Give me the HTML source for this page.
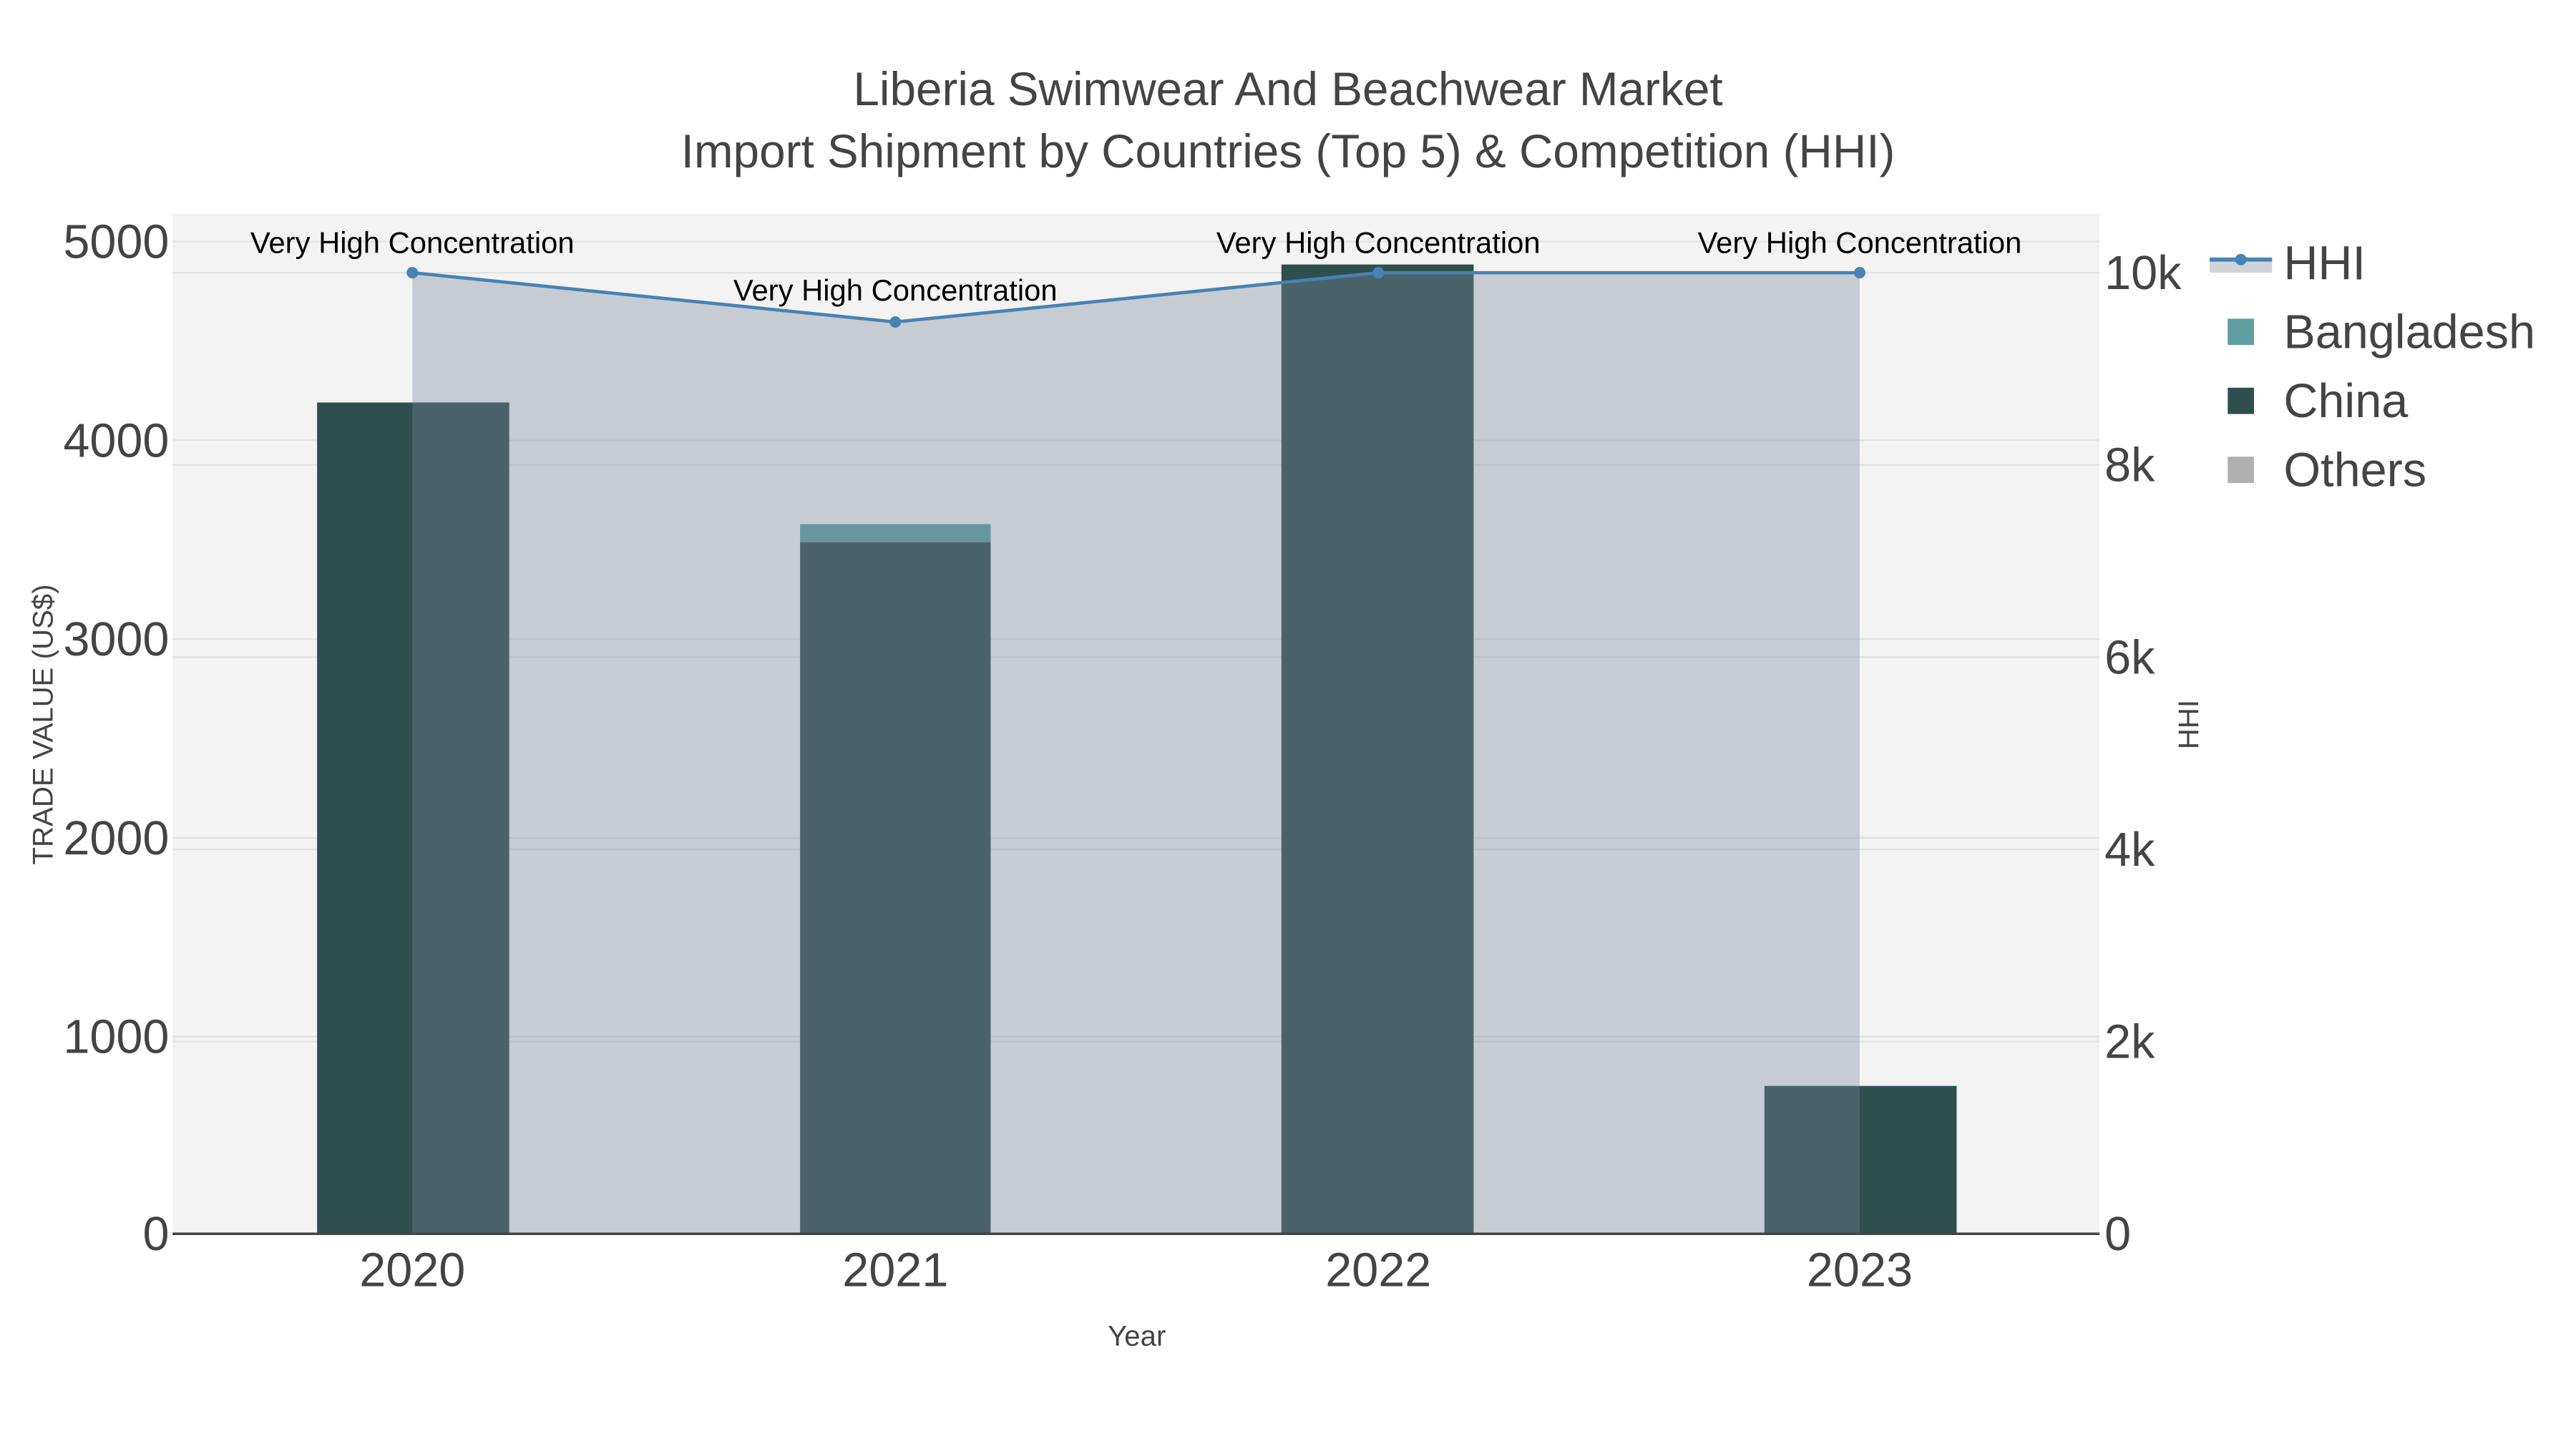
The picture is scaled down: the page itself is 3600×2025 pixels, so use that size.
<!DOCTYPE html>
<html><head><meta charset="utf-8"><style>
html,body{margin:0;padding:0;background:#fff;}
svg{display:block;font-family:"Liberation Sans",sans-serif;}
</style></head><body>
<svg width="3600" height="2025" viewBox="0 0 1568 882" preserveAspectRatio="none" xmlns="http://www.w3.org/2000/svg">
<rect width="1568" height="882" fill="#fff"/>
<rect x="105" y="130" width="1173" height="621" fill="#f3f3f3"/>
<g stroke="#e2e2e2" stroke-width="1">
<line x1="105" x2="1278" y1="147" y2="147"/><line x1="105" x2="1278" y1="268" y2="268"/>
<line x1="105" x2="1278" y1="389" y2="389"/><line x1="105" x2="1278" y1="510" y2="510"/>
<line x1="105" x2="1278" y1="631" y2="631"/>
<line x1="105" x2="1278" y1="166" y2="166"/><line x1="105" x2="1278" y1="283" y2="283"/>
<line x1="105" x2="1278" y1="400" y2="400"/><line x1="105" x2="1278" y1="517" y2="517"/>
<line x1="105" x2="1278" y1="634" y2="634"/>
</g>
<rect x="193" y="245" width="117" height="506" fill="#2f4f4f"/>
<rect x="487" y="330" width="116" height="421" fill="#2f4f4f"/>
<rect x="487" y="319" width="116" height="11" fill="#5f9ea0"/>
<rect x="780" y="161" width="117" height="590" fill="#2f4f4f"/>
<rect x="1074" y="661" width="117" height="90" fill="#2f4f4f"/>
<polygon points="251,166 545,196 839,166 1132,166 1132,751 251,751" fill="rgba(122,137,156,0.36)"/>
<polyline points="251,166 545,196 839,166 1132,166" fill="none" stroke="#4682b4" stroke-width="2"/>
<g fill="#4682b4"><circle cx="251" cy="166" r="3.5"/><circle cx="545" cy="196" r="3.5"/><circle cx="839" cy="166" r="3.5"/><circle cx="1132" cy="166" r="3.5"/></g>
<line x1="105" x2="1278" y1="751" y2="751" stroke="#444" stroke-width="1.5"/>
<g font-size="18.2" fill="#000" text-anchor="middle">
<text x="251" y="154">Very High Concentration</text>
<text x="545" y="183">Very High Concentration</text>
<text x="839" y="154">Very High Concentration</text>
<text x="1132" y="154">Very High Concentration</text>
</g>
<g font-size="28.6" fill="#444" text-anchor="middle">
<text x="784" y="64">Liberia Swimwear And Beachwear Market</text>
<text x="784" y="102">Import Shipment by Countries (Top 5) &amp; Competition (HHI)</text>
</g>
<g font-size="29" fill="#444" text-anchor="end">
<text x="103" y="157">5000</text><text x="103" y="278">4000</text><text x="103" y="399">3000</text>
<text x="103" y="520">2000</text><text x="103" y="641">1000</text><text x="103" y="761">0</text>
</g>
<g font-size="29" fill="#444" text-anchor="start">
<text x="1281" y="176">10k</text><text x="1281" y="293">8k</text><text x="1281" y="410">6k</text>
<text x="1281" y="527">4k</text><text x="1281" y="644">2k</text><text x="1281" y="761">0</text>
</g>
<g font-size="29" fill="#444" text-anchor="middle">
<text x="251" y="783">2020</text><text x="545" y="783">2021</text><text x="839" y="783">2022</text><text x="1132" y="783">2023</text>
</g>
<text x="692" y="819" font-size="17.5" fill="#444" text-anchor="middle">Year</text>
<text transform="translate(32,441) rotate(-90)" font-size="17.5" fill="#444" text-anchor="middle">TRADE VALUE (US$)</text>
<text transform="translate(1338,441) rotate(-90)" font-size="17.5" fill="#444" text-anchor="middle">HHI</text>
<rect x="1345" y="158" width="38" height="8" fill="rgba(122,137,156,0.36)"/>
<line x1="1345" x2="1383" y1="158" y2="158" stroke="#4682b4" stroke-width="2.5"/>
<circle cx="1364" cy="158" r="3.5" fill="#4682b4"/>
<rect x="1356" y="194" width="16" height="16" fill="#5f9ea0"/>
<rect x="1356" y="236" width="16" height="16" fill="#2f4f4f"/>
<rect x="1356" y="278" width="16" height="16" fill="#b0b0b0"/>
<g font-size="29" fill="#444">
<text x="1390" y="170">HHI</text><text x="1390" y="212">Bangladesh</text>
<text x="1390" y="254">China</text><text x="1390" y="296">Others</text>
</g>
</svg>
</body></html>
